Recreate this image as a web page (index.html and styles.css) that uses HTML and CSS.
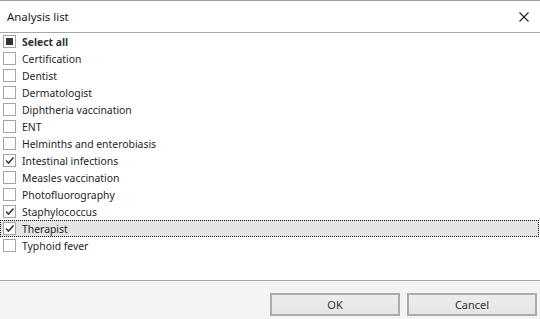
FILE: index.html
```html
<!DOCTYPE html>
<html>
<head>
<meta charset="utf-8">
<link rel="stylesheet" href="styles.css">
</head>
<body>
<div class="dialog">
  <div class="titlebar">
    <span class="title">Analysis list</span>
    <svg class="close" width="10" height="10" viewBox="0 0 10 10"><path d="M0.5 0.5 L9.5 9.5 M9.5 0.5 L0.5 9.5" stroke="#222" stroke-width="1.1" fill="none"/></svg>
  </div>
  <div class="list">
    <div class="row bold"><span class="box partial"><span class="fill"></span></span><span>Select all</span></div>
    <div class="row"><span class="box"></span><span>Certification</span></div>
    <div class="row"><span class="box"></span><span>Dentist</span></div>
    <div class="row"><span class="box"></span><span>Dermatologist</span></div>
    <div class="row"><span class="box"></span><span>Diphtheria vaccination</span></div>
    <div class="row"><span class="box"></span><span>ENT</span></div>
    <div class="row"><span class="box"></span><span>Helminths and enterobiasis</span></div>
    <div class="row"><span class="box"><svg width="11" height="11" viewBox="0 0 11 11"><path d="M2 5.5 L4.5 8 L9.5 2.5" stroke="#3a3a3a" stroke-width="1.6" fill="none"/></svg></span><span>Intestinal infections</span></div>
    <div class="row"><span class="box"></span><span>Measles vaccination</span></div>
    <div class="row"><span class="box"></span><span>Photofluorography</span></div>
    <div class="row"><span class="box"><svg width="11" height="11" viewBox="0 0 11 11"><path d="M2 5.5 L4.5 8 L9.5 2.5" stroke="#3a3a3a" stroke-width="1.6" fill="none"/></svg></span><span>Staphylococcus</span></div>
    <div class="row focused"><span class="box"><svg width="11" height="11" viewBox="0 0 11 11"><path d="M2 5.5 L4.5 8 L9.5 2.5" stroke="#3a3a3a" stroke-width="1.6" fill="none"/></svg></span><span>Therapist</span></div>
    <div class="row"><span class="box"></span><span>Typhoid fever</span></div>
  </div>
  <div class="footer">
    <button class="btn">OK</button>
    <button class="btn">Cancel</button>
  </div>
</div>
</body>
</html>
```
FILE: styles.css
```css
html, body {
  margin: 0;
  padding: 0;
  background: #ffffff;
}
body {
  font-family: "Noto Sans", "DejaVu Sans", sans-serif;
  font-size: 10.4px;
  color: #1e1e1e;
}
.dialog {
  width: 540px;
  height: 319px;
  display: flex;
  flex-direction: column;
  box-sizing: border-box;
  border-top: 1px solid #a0a0a0;
}
.titlebar {
  height: 31px;
  border-bottom: 1px solid #a8a8a8;
  display: flex;
  align-items: center;
  justify-content: space-between;
  padding: 0 11px 0 7px;
  box-sizing: content-box;
}
.title {
  font-size: 11.4px;
  color: #1a1a1a;
}
.close {
  display: block;
}
.list {
  flex: 1;
  display: flex;
  flex-direction: column;
}
.row {
  height: 17px;
  display: flex;
  align-items: center;
  gap: 6px;
  padding-left: 3px;
  box-sizing: border-box;
  margin-right: 1px;
}
.row.bold {
  font-weight: bold;
  color: #333;
}
.row.focused {
  background: #e4e4e4;
  outline: 1px dotted #111;
  outline-offset: -1px;
}
.box {
  width: 13px;
  height: 13px;
  box-sizing: border-box;
  border: 1px solid #a4a4a4;
  background: #fff;
  display: flex;
  align-items: center;
  justify-content: center;
  flex: none;
}
.fill {
  width: 7px;
  height: 7px;
  background: #333;
}
.footer {
  height: 39px;
  border-top: 1px solid #a8a8a8;
  background: #f4f4f4;
  display: flex;
  justify-content: flex-end;
  align-items: flex-start;
  gap: 7px;
  padding: 12px 3px 0 0;
  box-sizing: border-box;
}
.btn {
  width: 130px;
  height: 23px;
  border: 2px solid #ababab;
  background: linear-gradient(#ededed, #e5e5e5);
  font-family: "Noto Sans", "DejaVu Sans", sans-serif;
  font-size: 11px;
  color: #333;
  padding: 0;
  margin: 0;
}
```
